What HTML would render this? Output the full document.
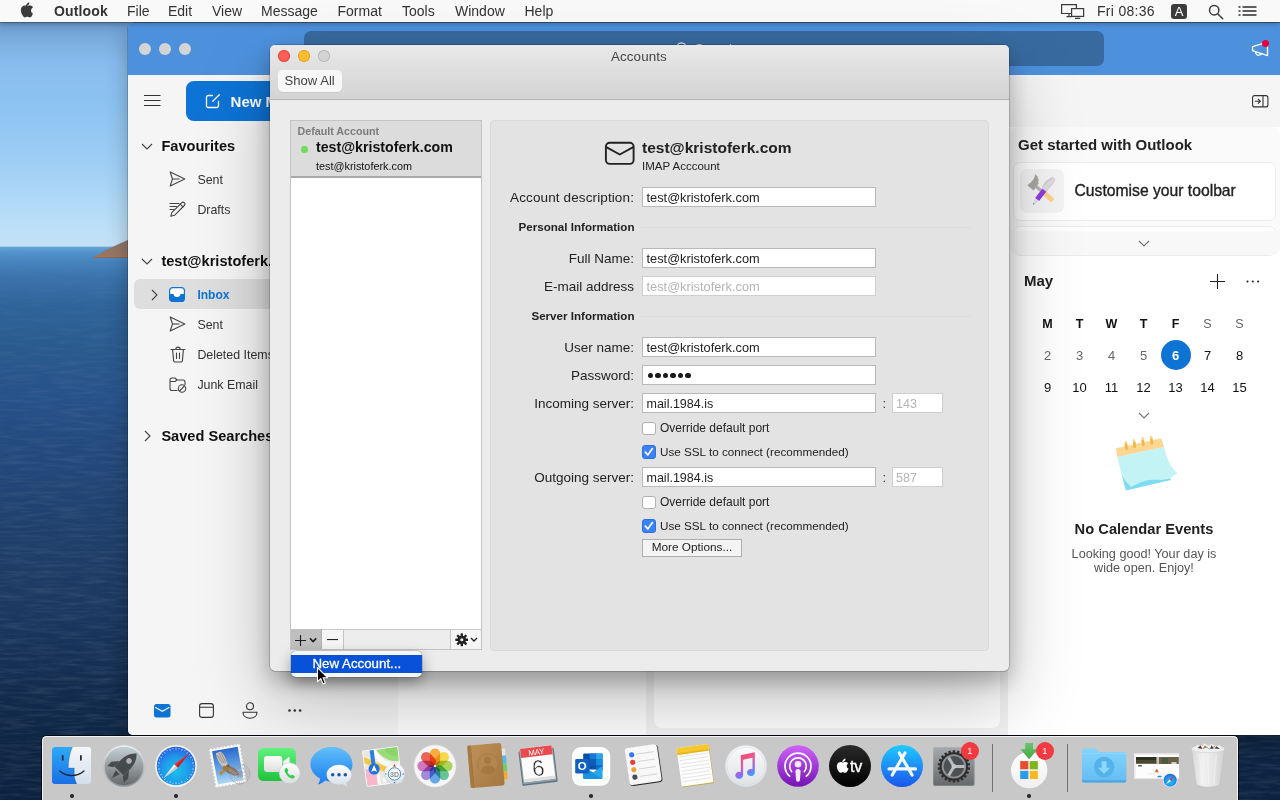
<!DOCTYPE html>
<html lang="en">
<head>
<meta charset="utf-8">
<title>Accounts</title>
<style>
*{box-sizing:border-box;margin:0;padding:0}
html,body{width:1280px;height:800px;overflow:hidden;background:#17345c}
body{will-change:transform;font-family:"Liberation Sans",sans-serif;color:#222;position:relative}
.abs{position:absolute}
.t{position:absolute;white-space:nowrap;line-height:1}
#desk{position:absolute;left:0;top:0;width:1280px;height:800px;
 background:linear-gradient(180deg,#6797c9 22px,#7aabdd 38px,#88bcee 62px,#8cc2f1 100px,#9acbf4 150px,#aad6f7 190px,#bbdff7 225px,#c4e1f5 246px,#62a2d6 247.500px,#5191cb 253px,#4683bd 262px,#3a73ab 278px,#2f649a 305px,#2a5a8e 350px,#26518a 400px,#23487a 460px,#1f406c 530px,#1b3860 610px,#132c4e 690px,#0e2645 740px,#0b2140 800px)}
#menubar{position:absolute;left:0;top:0;width:1280px;height:22px;background:#f9f9f9;box-shadow:0 1px 0 rgba(0,0,0,.25),0 2px 5px rgba(0,0,0,.25)}
#menubar .t{font-size:14px;color:#333;top:4px}
#ol{position:absolute;left:128px;top:23px;width:1160px;height:712px;background:#f1f1f1;border-radius:5px 0 0 5px;overflow:hidden;box-shadow:0 0 0 .5px rgba(0,0,0,.35),0 8px 22px rgba(0,0,0,.28)}
#oltitle{position:absolute;left:0;top:0;width:1160px;height:52px;background:#4d91dd}
#olsearch{position:absolute;left:176px;top:8px;width:800px;height:35px;border-radius:7px;background:#386aa0}
.tl{position:absolute;width:12px;height:12px;border-radius:50%}
#side{position:absolute;left:0;top:52px;width:270px;height:660px;background:#f5f5f5}
#side .h{font-weight:bold;color:#111}
#side .i{color:#333}
#list{position:absolute;left:270px;top:52px;width:248px;height:660px;background:#fdfdfd}
#read{position:absolute;left:526px;top:60px;width:346px;height:644.500px;background:#fefefe;border-radius:8px}
#right{position:absolute;left:880px;top:52px;width:280px;height:660px;background:#fff;overflow:hidden}
#dlg{position:absolute;left:270px;top:45px;width:739px;height:626px;background:#ececec;border-radius:5px;box-shadow:0 0 0 .5px rgba(0,0,0,.35),0 30px 70px rgba(0,0,0,.25),0 10px 22px rgba(0,0,0,.26)}
#dlgbar{position:absolute;left:0;top:0;width:739px;height:54.500px;border-radius:5px 5px 0 0;background:linear-gradient(180deg,#e9e9e9,#d3d3d3);border-bottom:1px solid #b4b4b4}
.inp{position:absolute;background:#fff;border:1px solid #b9b9b9;padding-left:3.500px;color:#222;white-space:nowrap;overflow:hidden}
.inp.dis{color:#b5b5b5;border-color:#cfcfcf}
.cb{position:absolute;border-radius:3px;background:#fff;border:1px solid #b0b0b0}
.cb.on{background:#3b82f7;border-color:#2f6fe0}
#dock{position:absolute;left:42px;top:736px;width:1196px;height:70px;background:#c8c8c8;border-radius:4.500px 4.500px 0 0;border:1px solid #f2f2f2;border-bottom:0;box-shadow:0 0 0 1px rgba(0,0,0,.72)}
.dot{position:absolute;width:3px;height:3px;border-radius:50%;background:#2b2b2b}
</style>
</head>
<body>
<div id="desk"></div>
<svg class="abs" style="left:0;top:248px" width="1280" height="552"><defs><filter id="fSea" x="0" y="0" width="100%" height="100%"><feTurbulence type="fractalNoise" baseFrequency="0.035 0.300" numOctaves="3" seed="7"/><feColorMatrix type="matrix" values="0 0 0 0 1  0 0 0 0 1  0 0 0 0 1  1.600 0 0 0 -.62"/></filter><linearGradient id="gSeaFade" x1="0" y1="0" x2="0" y2="1"><stop offset="0" stop-color="#fff" stop-opacity=".15"/><stop offset=".25" stop-color="#fff" stop-opacity=".6"/><stop offset="1" stop-color="#fff" stop-opacity="1"/></linearGradient><mask id="mSea"><rect width="1280" height="552" fill="url(#gSeaFade)"/></mask></defs><g mask="url(#mSea)" opacity=".13"><rect width="128" height="552" filter="url(#fSea)"/><rect x="1238" y="480" width="42" height="72" filter="url(#fSea)"/></g></svg>
<svg class="abs" style="left:92px;top:238px" width="40" height="21" viewBox="0 0 40 21"><defs><linearGradient id="gIsl" x1="0" y1="0" x2="0" y2="1"><stop offset="0" stop-color="#8a7470"/><stop offset="1" stop-color="#9b7860"/></linearGradient></defs><path d="M.5 19.600L6 16.500 14 12 22 8.300 29 5 36 2V20L2 19.900z" fill="url(#gIsl)"/><path d="M.5 19.600L36 19.300V20H2z" fill="#7a6458"/></svg>
<div id="ol">
 <div id="oltitle">
  <div class="tl" style="left:11px;top:20px;background:#d4d4d4"></div>
  <div class="tl" style="left:31px;top:20px;background:#d4d4d4"></div>
  <div class="tl" style="left:51px;top:20px;background:#d4d4d4"></div>
  <div id="olsearch"></div>
  <svg class="abs" style="left:548px;top:19px" width="14" height="14" viewBox="0 0 14 14" fill="none" stroke="#e8eef6" stroke-width="1.200"><circle cx="5.500" cy="5.500" r="4.700"/><path d="M9 9l4 4"/></svg>
  <div class="t" style="left:567px;top:19.300px;font-size:13px;color:#e8eef6">Search</div>
  <svg class="abs" style="left:1123px;top:16px" width="20" height="20" viewBox="0 0 20 20" fill="none" stroke="#fff" stroke-width="1.300" stroke-linejoin="round" stroke-linecap="round"><path d="M1.600 7.700L16.500 3.200v13.400L1.600 11.700z"/><path d="M4.500 12.800c.3 2 1.600 3.400 3.400 3.400 1.300 0 2.300-.8 2.800-1.700"/></svg>
  <div class="abs" style="left:1134px;top:17px;width:7px;height:7px;border-radius:50%;background:#e8003c"></div>
 </div>
<div id="side">
 <svg class="abs" style="left:16px;top:19px" width="17" height="13" viewBox="0 0 17 13" stroke="#333" stroke-width="1.100"><path d="M0 1.500h16.500M0 6.500h16.500M0 11.500h16.500"/></svg>
 <div class="abs" style="left:58px;top:6px;width:200px;height:39.500px;border-radius:8px;background:#0d73d5"></div>
 <svg class="abs" style="left:76.5px;top:17.5px" width="16" height="16" viewBox="0 0 16 16" fill="none" stroke="#fff" stroke-width="1.300" stroke-linecap="round" stroke-linejoin="round"><path d="M7.500 2.500H3.300A1.800 1.800 0 0 0 1.500 4.300v8.400a1.800 1.800 0 0 0 1.800 1.800h8.400a1.800 1.800 0 0 0 1.800-1.800V8.500"/><path d="M14.300 1.700L7.800 8.200"/></svg>
 <div class="t" style="left:102.6px;top:18.90px;font-size:15px;font-weight:bold;color:#fff">New Message</div>
 <svg class="abs" style="left:13px;top:68px" width="12" height="7" viewBox="0 0 12 7" fill="none" stroke="#444" stroke-width="1.100"><path d="M1 1l5 5 5-5"/></svg>
 <div class="t h" style="left:33.4px;top:64.04px;font-size:14.6px;">Favourites</div>
 <svg class="abs" style="left:41px;top:96px" width="17" height="16" viewBox="0 0 17 16" fill="none" stroke="#444" stroke-width="1.100" stroke-linejoin="round"><path d="M1.200 1l14.600 7L1.200 15l2.300-7z"/><path d="M3.500 8h7"/></svg>
 <div class="t i" style="left:69.4px;top:98.50px;font-size:12.4px;">Sent</div>
 <svg class="abs" style="left:40.5px;top:125.5px" width="17" height="17" viewBox="0 0 17 17" fill="none" stroke="#444" stroke-width="1.100" stroke-linejoin="round" stroke-linecap="round"><path d="M1 2.500h9M1 5.500h6.500M1 8.500h4"/><path d="M12.600 1.800a1.900 1.900 0 0 1 2.700 2.700L5.500 14.300l-3.700 1 1-3.700z"/><path d="M11.300 3.100l2.700 2.700"/></svg>
 <div class="t i" style="left:69.4px;top:128.50px;font-size:12.4px;">Drafts</div>
 <svg class="abs" style="left:13px;top:183px" width="12" height="7" viewBox="0 0 12 7" fill="none" stroke="#444" stroke-width="1.100"><path d="M1 1l5 5 5-5"/></svg>
 <div class="t h" style="left:33.4px;top:178.94px;font-size:14.6px;">test@kristoferk.com</div>
 <div class="abs" style="left:6px;top:204px;width:260px;height:29.500px;border-radius:6px;background:#dedede"></div>
 <svg class="abs" style="left:23px;top:214px" width="7" height="12" viewBox="0 0 7 12" fill="none" stroke="#444" stroke-width="1.100"><path d="M1 1l5 5-5 5"/></svg>
 <svg class="abs" style="left:41px;top:212px" width="16" height="15" viewBox="0 0 16 15"><rect x=".6" y=".6" width="14.800" height="13.800" rx="3" fill="#fff" stroke="#0d73d5" stroke-width="1.200"/><path d="M.6 7h4a3.200 2.800 0 0 0 6.800 0h4v4.400a3 3 0 0 1-3 3H3.600a3 3 0 0 1-3-3z" fill="#0d73d5"/></svg>
 <div class="t" style="left:69.4px;top:213.84px;font-size:12px;font-weight:bold;color:#0d73d5">Inbox</div>
 <svg class="abs" style="left:41px;top:241px" width="17" height="16" viewBox="0 0 17 16" fill="none" stroke="#444" stroke-width="1.100" stroke-linejoin="round"><path d="M1.200 1l14.600 7L1.200 15l2.300-7z"/><path d="M3.500 8h7"/></svg>
 <div class="t i" style="left:69.4px;top:243.70px;font-size:12.4px;">Sent</div>
 <svg class="abs" style="left:41.5px;top:270.5px" width="16" height="17" viewBox="0 0 16 17" fill="none" stroke="#444" stroke-width="1.100" stroke-linecap="round" stroke-linejoin="round"><path d="M1 3.500h14M5.800 3.300a2.200 2.200 0 0 1 4.400 0"/><path d="M2.600 3.600l1 11a1.600 1.600 0 0 0 1.600 1.400h5.600a1.600 1.600 0 0 0 1.600-1.400l1-11"/><path d="M6.500 7v5.500M9.500 7v5.500"/></svg>
 <div class="t i" style="left:69.4px;top:273.50px;font-size:12.4px;">Deleted Items</div>
 <svg class="abs" style="left:40.5px;top:301.5px" width="18" height="16" viewBox="0 0 18 16" fill="none" stroke="#444" stroke-width="1.100" stroke-linejoin="round"><path d="M8.500 13.500H3A2 2 0 0 1 1 11.500V3a2 2 0 0 1 2-2h3l2 2h6a2 2 0 0 1 2 2v3"/><path d="M1 4.500h5l2-1.500"/><circle cx="13" cy="11.500" r="3.700"/><path d="M10.500 14l5-5"/></svg>
 <div class="t i" style="left:69.4px;top:303.50px;font-size:12.4px;">Junk Email</div>
 <svg class="abs" style="left:15.5px;top:355px" width="7" height="12" viewBox="0 0 7 12" fill="none" stroke="#444" stroke-width="1.100"><path d="M1 1l5 5-5 5"/></svg>
 <div class="t h" style="left:33.4px;top:353.64px;font-size:14.6px;">Saved Searches</div>
 <svg class="abs" style="left:26px;top:628.5px" width="17" height="14" viewBox="0 0 17 14"><rect x="0" y="0" width="16.500" height="13.500" rx="2.500" fill="#0d73d5"/><path d="M1 3.200l7.250 4 7.250-4" fill="none" stroke="#f5f5f5" stroke-width="1.200"/></svg>
 <svg class="abs" style="left:70.5px;top:627.5px" width="15" height="15" viewBox="0 0 15 15" fill="none" stroke="#333" stroke-width="1.100"><rect x=".6" y=".6" width="13.800" height="13.800" rx="2.500"/><path d="M.6 4.200h13.800"/></svg>
 <svg class="abs" style="left:114px;top:626.5px" width="16" height="17" viewBox="0 0 16 17" fill="none" stroke="#333" stroke-width="1.100"><circle cx="8" cy="4.300" r="3.500"/><path d="M1 10.200h14c0 3.600-3 6-7 6s-7-2.400-7-6z" stroke-linejoin="round"/></svg>
 <svg class="abs" style="left:159.5px;top:633.7px" width="14" height="3" viewBox="0 0 14 3" fill="#333"><circle cx="1.500" cy="1.500" r="1.300"/><circle cx="6.800" cy="1.500" r="1.300"/><circle cx="12.100" cy="1.500" r="1.300"/></svg>
</div>
 <div id="list"></div>
 <div id="read"></div>
<div id="right">
 <div class="abs" style="left:0;top:0;width:280px;height:52px;background:#f5f5f5"></div>
 <svg class="abs" style="left:244px;top:20px" width="17" height="13" viewBox="0 0 17 13" fill="none" stroke="#333" stroke-width="1.100"><rect x=".6" y=".6" width="15.300" height="11.300" rx="2"/><path d="M11 .6v11.300"/><path d="M3.200 6.250h5M6.200 4.200l2.100 2.050-2.100 2.050" stroke-linecap="round" stroke-linejoin="round"/></svg>
 <div class="abs" style="left:2px;top:52px;width:270px;height:128px;border-radius:8px;background:#fafafa"></div>
 <div class="t" style="left:10px;top:62.30px;font-size:15px;font-weight:bold;color:#222">Get started with Outlook</div>
 <div class="abs" style="left:4.5px;top:86.5px;width:263px;height:59px;border-radius:7px;background:#fff;border:1px solid #ececec"></div>
 <div class="abs" style="left:12px;top:94px;width:44px;height:44px;border-radius:7px;background:#f4f4f4"></div>
 <svg class="abs" style="left:12px;top:94px" width="44" height="44" viewBox="0 0 44 44"><g transform="translate(13.500 15.300) rotate(-50)"><rect x="-1.600" y="2" width="3.200" height="11" fill="#b7b4b0"/><rect x="-2.500" y="11" width="5" height="14.300" rx=".8" fill="#fdd38c"/><path transform="translate(2.600 0)" d="M-7.400-3.900h2.600l.8.600h3.800c2.400 0 4.300-.5 6.200-1.700l.9.900-1.300 1 .9.900-1.500.700.700 1-1.500.5.300 1c-1.800.6-2.800 1.500-3.400 2.500h-5.100l-.8.600h-2.600z" fill="#a9a6a1"/></g><g transform="translate(13.250 35.300) rotate(38)"><path d="M-2.500-17.900V-31a2.500 2.500 0 0 1 5 0v13.100z" fill="#dfdddb" stroke="#b38ae8" stroke-width=".25"/><path d="M-3.600-19.500v-6.500c0-3 1.200-4.500 3-5" fill="none" stroke="#c9c7c4" stroke-width="1.100"/><rect x="-2.500" y="-17.900" width="5" height="11.700" fill="#8e3be4"/><path d="M-2.500-6.200h5L.7-1.200H-.7z" fill="#e3e1df"/><path d="M-.7-1.300H.7L0 .6z" fill="#3b78c4"/></g></svg>
 <div class="t" style="left:66.5px;top:107.71px;font-size:15.7px;color:#222;-webkit-text-stroke:.35px #222">Customise your toolbar</div>
 <div class="abs" style="left:4.5px;top:150.5px;width:263px;height:30px;border-radius:7px;background:#fff;border:1px solid #ececec"></div>
 <div class="abs" style="left:2px;top:156px;width:270px;height:24px;border-radius:0 0 8px 8px;background:#f8f8f8"></div>
 <svg class="abs" style="left:130px;top:165px" width="12" height="7" viewBox="0 0 12 7" fill="none" stroke="#777" stroke-width="1.200"><path d="M1 1l5 5 5-5"/></svg>
 <div class="t" style="left:16px;top:198.30px;font-size:15px;font-weight:bold;color:#222">May</div>
 <svg class="abs" style="left:202px;top:198.5px" width="15" height="15" viewBox="0 0 15 15" stroke="#222" stroke-width="1.100"><path d="M7.500 0v15M0 7.500h15"/></svg>
 <svg class="abs" style="left:237.5px;top:204.7px" width="14" height="3" viewBox="0 0 14 3" fill="#222"><circle cx="1.500" cy="1.500" r="1.050"/><circle cx="6.800" cy="1.500" r="1.050"/><circle cx="12.100" cy="1.500" r="1.050"/></svg>
 <div class="t" style="left:-10.5px;width:100px;text-align:center;top:243.42px;font-size:12.5px;font-weight:bold;color:#111">M</div>
 <div class="t" style="left:21.5px;width:100px;text-align:center;top:243.42px;font-size:12.5px;font-weight:bold;color:#111">T</div>
 <div class="t" style="left:53.5px;width:100px;text-align:center;top:243.42px;font-size:12.5px;font-weight:bold;color:#111">W</div>
 <div class="t" style="left:85.5px;width:100px;text-align:center;top:243.42px;font-size:12.5px;font-weight:bold;color:#111">T</div>
 <div class="t" style="left:117.5px;width:100px;text-align:center;top:243.42px;font-size:12.5px;font-weight:bold;color:#111">F</div>
 <div class="t" style="left:149.5px;width:100px;text-align:center;top:243.42px;font-size:12.5px;color:#666">S</div>
 <div class="t" style="left:181.5px;width:100px;text-align:center;top:243.42px;font-size:12.5px;color:#666">S</div>
 <div class="abs" style="left:152.5px;top:265px;width:30px;height:30px;border-radius:50%;background:#0d73d5"></div>
 <div class="t" style="left:-10.5px;width:100px;text-align:center;top:274.00px;font-size:13px;color:#666">2</div>
 <div class="t" style="left:21.5px;width:100px;text-align:center;top:274.00px;font-size:13px;color:#666">3</div>
 <div class="t" style="left:53.5px;width:100px;text-align:center;top:274.00px;font-size:13px;color:#666">4</div>
 <div class="t" style="left:85.5px;width:100px;text-align:center;top:274.00px;font-size:13px;color:#666">5</div>
 <div class="t" style="left:117.5px;width:100px;text-align:center;top:274.00px;font-size:13px;color:#fff;font-weight:bold">6</div>
 <div class="t" style="left:149.5px;width:100px;text-align:center;top:274.00px;font-size:13px;color:#111">7</div>
 <div class="t" style="left:181.5px;width:100px;text-align:center;top:274.00px;font-size:13px;color:#111">8</div>
 <div class="t" style="left:-10.5px;width:100px;text-align:center;top:306.00px;font-size:13px;color:#111">9</div>
 <div class="t" style="left:21.5px;width:100px;text-align:center;top:306.00px;font-size:13px;color:#111">10</div>
 <div class="t" style="left:53.5px;width:100px;text-align:center;top:306.00px;font-size:13px;color:#111">11</div>
 <div class="t" style="left:85.5px;width:100px;text-align:center;top:306.00px;font-size:13px;color:#111">12</div>
 <div class="t" style="left:117.5px;width:100px;text-align:center;top:306.00px;font-size:13px;color:#111">13</div>
 <div class="t" style="left:149.5px;width:100px;text-align:center;top:306.00px;font-size:13px;color:#111">14</div>
 <div class="t" style="left:181.5px;width:100px;text-align:center;top:306.00px;font-size:13px;color:#111">15</div>
 
 <svg class="abs" style="left:130px;top:337px" width="12" height="7" viewBox="0 0 12 7" fill="none" stroke="#777" stroke-width="1.200"><path d="M1 1l5 5 5-5"/></svg>
 <svg class="abs" style="left:106px;top:359px" width="66" height="58" viewBox="0 0 66 58"><path d="M7.500 40L11.900 56.600 56.900 46.100 55.600 43z" fill="#7edcf0"/><path d="M3.300 22.900L49.900 12.800C51 16.500 51.800 19.500 53 22.900 54.500 27 55.500 30 57.400 32.500 59 35 61 37.300 63.500 39.100 59.500 42.500 56 44.800 51.200 45.600 46 46.400 40.500 45.300 35.500 46.100 31.500 46.700 28 47.800 25 49.100 22 50.400 19.500 51.800 17.100 53.100Q11.500 47.500 7.900 41.700z" fill="#c3f3f4"/><path d="M2.070 14.300L45.600 4.700Q47.300 4.300 47.800 5.900L49.900 12.800 3.300 22.900z" fill="#fdd692"/><g stroke-width="2.700" stroke-linecap="round"><path d="M11.700 8.300l.4 3M20 6.500l.4 2.800M28.500 4.400l.4 2.800M37.100 3l.4 2.800" stroke="#fdd692"/><path d="M12 10.800l.6 4M20.300 9l.5 3.700M28.800 7l.5 3.800M37.400 5.600l.5 3.600" stroke="#f6b648"/></g></svg>
 <div class="t" style="left:36.0px;width:200px;text-align:center;top:446.56px;font-size:14.7px;font-weight:bold;color:#222">No Calendar Events</div>
 <div class="t" style="left:36.0px;width:200px;text-align:center;top:472.89px;font-size:12.65px;color:#555">Looking good! Your day is</div>
 <div class="t" style="left:36.0px;width:200px;text-align:center;top:487.49px;font-size:12.65px;color:#555">wide open. Enjoy!</div>
</div>
</div>
<div id="menubar">
 <svg class="abs" style="left:20px;top:2px" width="15" height="16" viewBox="0 0 15 16"><path d="M10.300 0.200c.1 1-.3 1.900-.9 2.600-.6.700-1.500 1.200-2.400 1.100-.1-.9.300-1.900.9-2.500.6-.7 1.600-1.200 2.400-1.200zM13.700 5.500c-.1.100-1.700 1-1.700 2.900 0 2.300 2 3 2 3.100 0 .1-.3 1.100-1 2.100-.6.900-1.300 1.800-2.300 1.800s-1.300-.6-2.400-.6c-1.200 0-1.500.6-2.400.6-1 0-1.700-.9-2.400-1.900C2.500 12 1.700 9.900 1.700 7.900c0-3.100 2-4.700 4-4.700 1 0 1.900.7 2.500.7.600 0 1.600-.7 2.800-.7.400 0 2 .0 3 1.500z" fill="#3a3a3a" transform="translate(-.8,.3) scale(.98)"/></svg>
 <div class="t" style="left:54px;font-weight:bold;letter-spacing:.15px">Outlook</div>
 <div class="t" style="left:127px">File</div>
 <div class="t" style="left:168px">Edit</div>
 <div class="t" style="left:212px">View</div>
 <div class="t" style="left:261px">Message</div>
 <div class="t" style="left:337.500px">Format</div>
 <div class="t" style="left:402px">Tools</div>
 <div class="t" style="left:455px">Window</div>
 <div class="t" style="left:524.500px">Help</div>
 <svg class="abs" style="left:1060px;top:3px" width="26" height="16" viewBox="0 0 26 16" fill="none" stroke="#3a3a3a" stroke-width="1.200"><path d="M11 10.500H1.600V1.600h14.800v3.400"/><path d="M6.500 13.600h5M9 10.500v3" /><rect x="11.600" y="5.600" width="12" height="7.800" fill="#f9f9f9"/><path d="M15 15.400h5.200" stroke-width="1.400"/></svg>
 <div class="t" style="left:1097px;letter-spacing:.3px">Fri 08:36</div>
 <div class="abs" style="left:1171px;top:3.500px;width:16px;height:15.500px;border-radius:3px;background:#3c3c3c"></div>
 <div class="t" style="left:1174.800px;top:5px;color:#fff;font-size:13px">A</div>
 <svg class="abs" style="left:1208px;top:4px" width="16" height="16" viewBox="0 0 16 16" fill="none" stroke="#3a3a3a" stroke-width="1.500"><circle cx="6.200" cy="6.200" r="4.700"/><path d="M9.700 9.700l5 5" stroke-linecap="round"/></svg>
 <svg class="abs" style="left:1238px;top:4px" width="20" height="14" viewBox="0 0 20 14" fill="#3a3a3a"><rect x="0.500" y="2.200" width="2" height="1.600"/><rect x="4.500" y="2.200" width="14" height="1.600"/><rect x="0.500" y="6.200" width="2" height="1.600"/><rect x="4.500" y="6.200" width="14" height="1.600"/><rect x="0.500" y="10.200" width="2" height="1.600"/><rect x="4.500" y="10.200" width="14" height="1.600"/></svg>
</div>
<div id="dlg">
 <div id="dlgbar"></div>
 <div class="tl" style="left:8px;top:5px;background:#fd5f57;box-shadow:inset 0 0 0 .8px rgba(215,50,45,.75)"></div>
 <div class="tl" style="left:28px;top:5px;background:#febc2e;box-shadow:inset 0 0 0 .8px rgba(215,150,25,.8)"></div>
 <div class="tl" style="left:48px;top:5px;background:#d3d3d3;box-shadow:inset 0 0 0 .8px rgba(170,170,170,.8)"></div>
 <div class="t" style="left:341px;top:4.66px;font-size:13.4px;color:#444;letter-spacing:.1px">Accounts</div>
 <div class="abs" style="left:8px;top:25px;width:64px;height:22px;border-radius:4.500px;background:#f7f7f7;box-shadow:0 .5px .5px rgba(0,0,0,.12)"></div>
 <div class="t" style="left:14.5px;top:29.11px;font-size:13.1px;color:#444">Show All</div>
 <div class="abs" style="left:20px;top:75px;width:192px;height:530px;background:#fff;border:1px solid #c4c4c4"></div>
 <div class="abs" style="left:21px;top:76px;width:190px;height:57px;background:#dcdcdc;border-bottom:2px solid #a9a9a9"></div>
 <div class="t" style="left:27.5px;top:80.94px;font-size:10.7px;font-weight:bold;color:#7b7b7b">Default Account</div>
 <div class="abs" style="left:31px;top:101px;width:6.500px;height:6.500px;border-radius:50%;background:#6fdc5c"></div>
 <div class="t" style="left:46px;top:94.88px;font-size:14.2px;font-weight:bold;color:#111">test@kristoferk.com</div>
 <div class="t" style="left:46px;top:115.82px;font-size:10.85px;color:#111">test@kristoferk.com</div>
 <div class="abs" style="left:21px;top:584px;width:190px;height:20px;background:#ededed;border-top:1px solid #c9c9c9"></div>
 <div class="abs" style="left:21px;top:584px;width:31px;height:20px;background:#bfbfbf;border-right:1px solid #b0b0b0"></div>
 <div class="abs" style="left:52px;top:585px;width:22px;height:19px;background:#f5f5f5;border-right:1px solid #c4c4c4"></div>
 <div class="abs" style="left:180px;top:585px;width:31px;height:19px;background:#f5f5f5;border-left:1px solid #c4c4c4"></div>
 <svg class="abs" style="left:24px;top:589px" width="26" height="13" viewBox="0 0 26 13" fill="none" stroke="#1e1e1e" stroke-width="1.100"><path d="M6.500 1v11M1 6.500h11"/><path d="M16 4.400l3.100 3.100 3.100-3.100" stroke-width="1.600"/></svg>
 <svg class="abs" style="left:57px;top:594px" width="12" height="2" viewBox="0 0 12 2" stroke="#222" stroke-width="1.100"><path d="M0 .55h11"/></svg>
 <svg class="abs" style="left:184.7px;top:588.2px" width="13.600" height="13.600" viewBox="0 0 15 15"><g fill="#222"><circle cx="7.500" cy="7.500" r="4.600"/><rect x="6.200" y="0.300" width="2.600" height="4" rx=".5" transform="rotate(0 7.500 7.500)"/><rect x="6.200" y="0.300" width="2.600" height="4" rx=".5" transform="rotate(45 7.500 7.500)"/><rect x="6.200" y="0.300" width="2.600" height="4" rx=".5" transform="rotate(90 7.500 7.500)"/><rect x="6.200" y="0.300" width="2.600" height="4" rx=".5" transform="rotate(135 7.500 7.500)"/><rect x="6.200" y="0.300" width="2.600" height="4" rx=".5" transform="rotate(180 7.500 7.500)"/><rect x="6.200" y="0.300" width="2.600" height="4" rx=".5" transform="rotate(225 7.500 7.500)"/><rect x="6.200" y="0.300" width="2.600" height="4" rx=".5" transform="rotate(270 7.500 7.500)"/><rect x="6.200" y="0.300" width="2.600" height="4" rx=".5" transform="rotate(315 7.500 7.500)"/></g><circle cx="7.500" cy="7.500" r="1.700" fill="#f0f0f0"/></svg>
 <svg class="abs" style="left:200px;top:592px" width="9" height="6" viewBox="0 0 9 6" fill="none" stroke="#222" stroke-width="1.400"><path d="M1 1l3 3 3-3"/></svg>
 <div class="abs" style="left:220px;top:75px;width:499px;height:531px;border-radius:4px;background:#e3e3e3;border:1px solid #dadada"></div>
 <svg class="abs" style="left:334px;top:96px" width="32" height="25" viewBox="0 0 32 25" fill="none" stroke="#222" stroke-width="1.900" stroke-linejoin="round"><rect x="1.900" y="1.700" width="27.700" height="21.200" rx="3.800"/><path d="M2.300 6.200l13.450 7.300L29.200 6.200"/></svg>
 <div class="t" style="left:372px;top:94.68px;font-size:15.5px;font-weight:bold;color:#222">test@kristoferk.com</div>
 <div class="t" style="left:372px;top:116.27px;font-size:11.5px;color:#222">IMAP Acccount</div>
 <div class="t" style="left:114px;width:250px;text-align:right;top:145.87px;font-size:13.5px;letter-spacing:.12px">Account description:</div>
 <div class="inp" style="left:372px;top:142px;width:234px;height:19.5px;font-size:12.8px;line-height:19.0px">test@kristoferk.com</div>
 <div class="t" style="left:114.5px;width:250px;text-align:right;top:176.18px;font-size:11.6px;font-weight:bold">Personal Information</div>
 <div class="abs" style="left:371px;top:182px;width:330px;height:1px;background:#dcdcdc"></div>
 <div class="t" style="left:114px;width:250px;text-align:right;top:206.97px;font-size:13.5px;">Full Name:</div>
 <div class="inp" style="left:372px;top:203px;width:234px;height:19.5px;font-size:12.8px;line-height:19.0px">test@kristoferk.com</div>
 <div class="t" style="left:114px;width:250px;text-align:right;top:234.87px;font-size:13.5px;">E-mail address</div>
 <div class="inp dis" style="left:372px;top:231px;width:234px;height:19.5px;font-size:12.8px;line-height:19.0px">test@kristoferk.com</div>
 <div class="t" style="left:114.5px;width:250px;text-align:right;top:265.18px;font-size:11.6px;font-weight:bold">Server Information</div>
 <div class="abs" style="left:371px;top:271px;width:330px;height:1px;background:#dcdcdc"></div>
 <div class="t" style="left:114px;width:250px;text-align:right;top:295.87px;font-size:13.5px;">User name:</div>
 <div class="inp" style="left:372px;top:292px;width:234px;height:19.5px;font-size:12.8px;line-height:19.0px">test@kristoferk.com</div>
 <div class="t" style="left:114px;width:250px;text-align:right;top:323.87px;font-size:13.5px;">Password:</div>
 <div class="inp" style="left:372px;top:320.3px;width:234px;height:19.5px;font-size:12.8px;line-height:19.0px"><i style="position:absolute;left:4.60px;top:6.300px;width:5.600px;height:5.600px;border-radius:50%;background:#1a1a1a"></i><i style="position:absolute;left:12.15px;top:6.300px;width:5.600px;height:5.600px;border-radius:50%;background:#1a1a1a"></i><i style="position:absolute;left:19.70px;top:6.300px;width:5.600px;height:5.600px;border-radius:50%;background:#1a1a1a"></i><i style="position:absolute;left:27.25px;top:6.300px;width:5.600px;height:5.600px;border-radius:50%;background:#1a1a1a"></i><i style="position:absolute;left:34.80px;top:6.300px;width:5.600px;height:5.600px;border-radius:50%;background:#1a1a1a"></i><i style="position:absolute;left:42.35px;top:6.300px;width:5.600px;height:5.600px;border-radius:50%;background:#1a1a1a"></i></div>
 <div class="t" style="left:114px;width:250px;text-align:right;top:351.87px;font-size:13.5px;">Incoming server:</div>
 <div class="inp" style="left:372px;top:348.3px;width:234px;height:19.5px;font-size:12.5px;line-height:21.0px">mail.1984.is</div>
 <div class="t" style="left:612.5px;top:351.50px;font-size:13px;color:#333">:</div>
 <div class="inp dis" style="left:621.5px;top:348.3px;width:51.5px;height:19.5px;font-size:12.5px;line-height:21.0px">143</div>
 <div class="cb" style="left:372.3px;top:376.5px;width:13.500px;height:13.500px"></div><div class="t" style="left:390px;top:376.54px;font-size:12px;color:#222">Override default port</div>
 <div class="cb on" style="left:372.3px;top:400.3px;width:13.500px;height:13.500px"></div><svg class="abs" style="left:372.3px;top:400.3px" width="13.500" height="13.500" viewBox="0 0 13.500 13.500" fill="none" stroke="#fff" stroke-width="1.700" stroke-linecap="round" stroke-linejoin="round"><path d="M3.300 7.200l2.500 2.700 4.600-6.300"/></svg><div class="t" style="left:390px;top:400.60px;font-size:11.7px;color:#222">Use SSL to connect (recommended)</div>
 <div class="t" style="left:114px;width:250px;text-align:right;top:425.87px;font-size:13.5px;">Outgoing server:</div>
 <div class="inp" style="left:372px;top:422.3px;width:234px;height:19.5px;font-size:12.5px;line-height:21.0px">mail.1984.is</div>
 <div class="t" style="left:612.5px;top:425.50px;font-size:13px;color:#333">:</div>
 <div class="inp dis" style="left:621.5px;top:422.3px;width:51.5px;height:19.5px;font-size:12.5px;line-height:21.0px">587</div>
 <div class="cb" style="left:372.3px;top:450.5px;width:13.500px;height:13.500px"></div><div class="t" style="left:390px;top:450.54px;font-size:12px;color:#222">Override default port</div>
 <div class="cb on" style="left:372.3px;top:474.3px;width:13.500px;height:13.500px"></div><svg class="abs" style="left:372.3px;top:474.3px" width="13.500" height="13.500" viewBox="0 0 13.500 13.500" fill="none" stroke="#fff" stroke-width="1.700" stroke-linecap="round" stroke-linejoin="round"><path d="M3.300 7.200l2.500 2.700 4.600-6.300"/></svg><div class="t" style="left:390px;top:474.60px;font-size:11.7px;color:#222">Use SSL to connect (recommended)</div>
 <div class="abs" style="left:372px;top:494px;width:99.500px;height:18px;background:#f4f4f4;border:1px solid #aeaeae"></div>
 <div class="t" style="left:381.7px;top:497.01px;font-size:11.8px;color:#222">More Options...</div>
</div>
<div class="abs" style="left:291px;top:651px;width:131px;height:26px;border-radius:5px;background:#f6f6f6;box-shadow:0 0 0 .5px rgba(0,0,0,.25),0 5px 14px rgba(0,0,0,.35)"></div>
<div class="abs" style="left:291px;top:655px;width:131px;height:17.500px;background:#0752d9"></div>
<div class="t" style="left:312.5px;top:656.74px;font-size:13.3px;color:#fff;-webkit-text-stroke:.3px #fff">New Account...</div>
<svg class="abs" style="left:316px;top:666px" width="14" height="20" viewBox="0 0 14 20"><path d="M1.500 1.500v14.200l3.300-3.100 2.300 5.500 2.300-1-2.300-5.300h4.600z" fill="#000" stroke="#fff" stroke-width="1.100" stroke-linejoin="round"/></svg>
<div id="dock"></div>
<svg width="0" height="0" style="position:absolute"><defs>
<linearGradient id="gFinL" x1="0" y1="0" x2="0" y2="1"><stop offset="0" stop-color="#2daaf6"/><stop offset="1" stop-color="#1a6fe6"/></linearGradient>
<linearGradient id="gFinR" x1="0" y1="0" x2="0" y2="1"><stop offset="0" stop-color="#f6f8fb"/><stop offset="1" stop-color="#d3deec"/></linearGradient>
<linearGradient id="gLpO" x1="0" y1="0" x2="0" y2="1"><stop offset="0" stop-color="#eef3f5"/><stop offset="1" stop-color="#8d9194"/></linearGradient>
<linearGradient id="gLpI" x1="0" y1="0" x2="0" y2="1"><stop offset="0" stop-color="#c3d0d5"/><stop offset=".5" stop-color="#979da0"/><stop offset="1" stop-color="#67696b"/></linearGradient>
<radialGradient id="gSaf" cx=".5" cy=".62" r=".62"><stop offset="0" stop-color="#1cc0ee"/><stop offset=".55" stop-color="#1e9bea"/><stop offset="1" stop-color="#2a5fe2"/></radialGradient>
<linearGradient id="gSky" x1="0" y1="0" x2="0" y2="1"><stop offset="0" stop-color="#2a68cc"/><stop offset=".6" stop-color="#6aa8e8"/><stop offset="1" stop-color="#b4daf6"/></linearGradient>
<linearGradient id="gFT" x1="0" y1="0" x2="0" y2="1"><stop offset="0" stop-color="#62f27e"/><stop offset="1" stop-color="#1ec23c"/></linearGradient>
<linearGradient id="gWh" x1="0" y1="0" x2="0" y2="1"><stop offset="0" stop-color="#ffffff"/><stop offset="1" stop-color="#dcdcdc"/></linearGradient>
<linearGradient id="gMsg" x1="0" y1="0" x2="0" y2="1"><stop offset="0" stop-color="#62c0f9"/><stop offset="1" stop-color="#1a7cf0"/></linearGradient>
<linearGradient id="gMsg2" x1="0" y1="0" x2="0" y2="1"><stop offset="0" stop-color="#ffffff"/><stop offset="1" stop-color="#d6dfea"/></linearGradient>
<linearGradient id="gBook" x1="0" y1="0" x2="1" y2="1"><stop offset="0" stop-color="#c0925a"/><stop offset="1" stop-color="#a47640"/></linearGradient>
<linearGradient id="gMus" x1="0" y1="0" x2="0" y2="1"><stop offset="0" stop-color="#fbfbfc"/><stop offset="1" stop-color="#dfe2e5"/></linearGradient>
<linearGradient id="gNote" x1=".2" y1="0" x2=".6" y2="1"><stop offset="0" stop-color="#fb3d62"/><stop offset=".45" stop-color="#e85a9a"/><stop offset=".75" stop-color="#8a6cf2"/><stop offset="1" stop-color="#30aafa"/></linearGradient>
<linearGradient id="gPod" x1="0" y1="0" x2="0" y2="1"><stop offset="0" stop-color="#cf62f8"/><stop offset="1" stop-color="#7414b4"/></linearGradient>
<linearGradient id="gTV" x1="0" y1="0" x2="0" y2="1"><stop offset="0" stop-color="#2a2a2a"/><stop offset="1" stop-color="#000"/></linearGradient>
<linearGradient id="gAS" x1="0" y1="0" x2="0" y2="1"><stop offset="0" stop-color="#1fcbff"/><stop offset="1" stop-color="#1a55ee"/></linearGradient>
<linearGradient id="gSP" x1="0" y1="0" x2="0" y2="1"><stop offset="0" stop-color="#a6aaac"/><stop offset="1" stop-color="#65696b"/></linearGradient>
<linearGradient id="gFold" x1="0" y1="0" x2="0" y2="1"><stop offset="0" stop-color="#84d4fb"/><stop offset="1" stop-color="#62bdf3"/></linearGradient>
<linearGradient id="gArr" x1="0" y1="0" x2="0" y2="1"><stop offset="0" stop-color="#6cc46a"/><stop offset="1" stop-color="#46a546"/></linearGradient>
<linearGradient id="gTrash" x1="0" y1="0" x2="1" y2="0"><stop offset="0" stop-color="#d9d9d9"/><stop offset=".35" stop-color="#f4f4f4"/><stop offset=".7" stop-color="#e6e6e6"/><stop offset="1" stop-color="#cfcfcf"/></linearGradient>
</defs></svg>
<svg class="abs" style="left:52px;top:747.4px;overflow:visible" width="39.2" height="36.9" viewBox="0 0 39.2 36.9" ><defs><clipPath id="cFin"><rect x="0" y="0" width="39.200" height="36.900" rx="3"/></clipPath></defs>
<g clip-path="url(#cFin)"><rect width="39.200" height="36.900" fill="url(#gFinR)"/>
<path d="M0 0H20.500C17.500 6.500 16.600 13.500 16.300 21h6v5.500c0 4 .8 7.500 2.500 10.400H0z" fill="url(#gFinL)"/></g>
<path d="M10.700 8.800v4M28.900 8.800v4" stroke="#1c2430" stroke-width="1.700" stroke-linecap="round"/>
<path d="M7.700 24.100c7 6 17.300 6 24.300 0" fill="none" stroke="#1c2430" stroke-width="1.400" stroke-linecap="round"/>
<path d="M20.500 0C17.500 6.500 16.600 13.500 16.300 21h6v5.500c0 4 .8 7.500 2.500 10.400" fill="none" stroke="#1c2430" stroke-width=".5" opacity=".35"/></svg>
<div class="dot" style="left:70.2px;top:794.300px;width:3.400px;height:3.400px"></div>
<svg class="abs" style="left:103px;top:745.1px;overflow:visible" width="42" height="42" viewBox="0 0 42 42" ><circle cx="21" cy="21" r="20.800" fill="url(#gLpO)"/><circle cx="21" cy="21" r="19.300" fill="url(#gLpI)"/>
<g transform="rotate(45 21 21) translate(21 21) scale(1.18) translate(-21 -20.500)" fill="#474a4d"><path d="M21 5.500c4 3.500 5.500 8.500 5.500 13v8h-11v-8c0-4.500 1.500-9.500 5.500-13z"/><path d="M15.500 20l-4.500 5.500v5l4.500-3zM26.500 20l4.500 5.500v5l-4.500-3z"/><path d="M18.500 28h5l-2.500 7z"/><circle cx="21" cy="14.500" r="2.300" fill="#a9b0b4"/></g></svg>
<svg class="abs" style="left:155.1px;top:745px;overflow:visible" width="42" height="42" viewBox="0 0 42 42" ><circle cx="21" cy="21" r="21" fill="#f3f3f3"/><circle cx="21" cy="21" r="19.300" fill="url(#gSaf)"/>
<path d="M21.00 4.70L21.00 2.70M23.97 4.16L24.18 2.98M26.57 5.68L27.26 3.80M29.55 6.19L30.15 5.15M31.48 8.51L32.76 6.98M34.10 10.01L35.02 9.24M35.12 12.85L36.85 11.85M37.07 15.15L38.20 14.74M37.05 18.17L39.02 17.82M38.10 21.00L39.30 21.00M37.05 23.83L39.02 24.18M37.07 26.85L38.20 27.26M35.12 29.15L36.85 30.15M34.10 31.99L35.02 32.76M31.48 33.49L32.76 35.02M29.55 35.81L30.15 36.85M26.57 36.32L27.26 38.20M23.97 37.84L24.18 39.02M21.00 37.30L21.00 39.30M18.03 37.84L17.82 39.02M15.43 36.32L14.74 38.20M12.45 35.81L11.85 36.85M10.52 33.49L9.24 35.02M7.90 31.99L6.98 32.76M6.88 29.15L5.15 30.15M4.93 26.85L3.80 27.26M4.95 23.83L2.98 24.18M3.90 21.00L2.70 21.00M4.95 18.17L2.98 17.82M4.93 15.15L3.80 14.74M6.88 12.85L5.15 11.85M7.90 10.01L6.98 9.24M10.52 8.51L9.24 6.98M12.45 6.19L11.85 5.15M15.43 5.68L14.74 3.80M18.03 4.16L17.82 2.98" stroke="#fff" stroke-width=".7" opacity=".85"/>
<g transform="rotate(46 21 21)"><path d="M21 3.500l2.600 17.500h-5.200z" fill="#f03030"/><path d="M21 38.500l2.600-17.500h-5.200z" fill="#f2f2f2"/><path d="M21 3.500l2.600 17.500H21z" fill="#c41c24"/><path d="M21 38.500l2.600-17.500H21z" fill="#c9c9c9"/></g></svg>
<div class="dot" style="left:174.4px;top:794.300px;width:3.400px;height:3.400px"></div>
<svg class="abs" style="left:211.5px;top:745.7px;overflow:visible" width="31.6" height="39.4" viewBox="0 0 31.6 39.4" ><g transform="rotate(-10 15.8 19.7)"><rect width="31.6" height="39.4" fill="#fbfbfb"/><g fill="#c8c8c8"><circle cx="0.00" cy="0" r="1.050"/><circle cx="0.00" cy="39.4" r="1.050"/><circle cx="3.51" cy="0" r="1.050"/><circle cx="3.51" cy="39.4" r="1.050"/><circle cx="7.02" cy="0" r="1.050"/><circle cx="7.02" cy="39.4" r="1.050"/><circle cx="10.53" cy="0" r="1.050"/><circle cx="10.53" cy="39.4" r="1.050"/><circle cx="14.04" cy="0" r="1.050"/><circle cx="14.04" cy="39.4" r="1.050"/><circle cx="17.56" cy="0" r="1.050"/><circle cx="17.56" cy="39.4" r="1.050"/><circle cx="21.07" cy="0" r="1.050"/><circle cx="21.07" cy="39.4" r="1.050"/><circle cx="24.58" cy="0" r="1.050"/><circle cx="24.58" cy="39.4" r="1.050"/><circle cx="28.09" cy="0" r="1.050"/><circle cx="28.09" cy="39.4" r="1.050"/><circle cx="31.60" cy="0" r="1.050"/><circle cx="31.60" cy="39.4" r="1.050"/><circle cx="0" cy="0.00" r="1.050"/><circle cx="31.6" cy="0.00" r="1.050"/><circle cx="0" cy="3.58" r="1.050"/><circle cx="31.6" cy="3.58" r="1.050"/><circle cx="0" cy="7.16" r="1.050"/><circle cx="31.6" cy="7.16" r="1.050"/><circle cx="0" cy="10.75" r="1.050"/><circle cx="31.6" cy="10.75" r="1.050"/><circle cx="0" cy="14.33" r="1.050"/><circle cx="31.6" cy="14.33" r="1.050"/><circle cx="0" cy="17.91" r="1.050"/><circle cx="31.6" cy="17.91" r="1.050"/><circle cx="0" cy="21.49" r="1.050"/><circle cx="31.6" cy="21.49" r="1.050"/><circle cx="0" cy="25.07" r="1.050"/><circle cx="31.6" cy="25.07" r="1.050"/><circle cx="0" cy="28.65" r="1.050"/><circle cx="31.6" cy="28.65" r="1.050"/><circle cx="0" cy="32.24" r="1.050"/><circle cx="31.6" cy="32.24" r="1.050"/><circle cx="0" cy="35.82" r="1.050"/><circle cx="31.6" cy="35.82" r="1.050"/><circle cx="0" cy="39.40" r="1.050"/><circle cx="31.6" cy="39.40" r="1.050"/></g>
<rect x="2.800" y="2.800" width="26.0" height="33.8" fill="url(#gSky)"/>
</g>
<path d="M3.900 7.200L8.700 5.500c1.600 1.200 2.900 2.800 3.700 4.600l3.300 8-3.500 4.400-4.600-5.500C5.700 14.200 4.400 11 3.900 7.200z" fill="#c9c4bc"/><path d="M5 9l5 7.500M6.800 7l5.500 10.500M9 6.500l4.800 10" stroke="#6e6258" stroke-width=".55" fill="none"/>
<path d="M14.300 18.800l5.500 2c2.500 1.100 4.600 2.700 6 4.600l1.900 3.800-5.500.4-5.600-2.400-4-2.600z" fill="#86705c"/><path d="M16 22l9 5.800M17 24.500l6.500 4" stroke="#cfc6b8" stroke-width=".55"/>
<path d="M11 23l-3.900 4 1.500 2.600 4.600-3.800z" fill="#b48c46"/>
<ellipse cx="13.600" cy="22.300" rx="3.300" ry="2.200" transform="rotate(28 13.600 22.300)" fill="#a47c3a"/><circle cx="16.200" cy="19.900" r="1.300" fill="#7c5e34"/>
<g transform="translate(28 28)" fill="none" stroke="#8c8c94" opacity=".55"><circle r="10" stroke-width=".9"/><circle r="6.200" stroke-width=".8"/><circle r="8.100" stroke-width="1.600" stroke-dasharray=".8 1.300" opacity=".7"/><path d="M.5-3c.8-1.300 1.800-1.300 1.800-1.300s.1 1-.6 1.700c-.6.700-1.200.6-1.200.6zM2.900 1.900c-.4 1-1 1.900-1.700 1.900-.6 0-.9-.4-1.600-.4s-1 .4-1.600.4c-1.400 0-3.200-3.700-1.700-5.600.5-.7 1.400-1 2-1 .7 0 1.200.4 1.700.4s1.200-.5 2.100-.4c.4 0 1.300.2 1.900 1-1.500.9-1.300 3 .1 3.700z" fill="#8c8c94" stroke="none"/></g></svg>
<svg class="abs" style="left:257.75px;top:748px;overflow:visible" width="37.9" height="33" viewBox="0 0 37.9 33" ><rect width="37.900" height="33" rx="5.500" fill="url(#gFT)"/>
<rect x="6" y="8" width="18.300" height="16" rx="3.200" fill="url(#gWh)"/><path d="M25.300 13.200l5.200-4c.7-.5 1.200-.2 1.200.6v12.400c0 .8-.5 1.100-1.200.6l-5.200-4z" fill="#f2f2f2"/>
<circle cx="31.650" cy="25.250" r="10.500" fill="url(#gWh)" stroke="#bdbdbd" stroke-width=".4"/>
<path d="M27.400 20.600c.5-.7 1.300-.9 1.700-.3l1.100 1.700c.3.500.1 1-.3 1.400l-.5.500c.7 1.600 2 3 3.500 3.800l.6-.5c.4-.4 1-.5 1.400-.2l1.600 1.200c.6.500.3 1.200-.4 1.700-1 .8-2.300.8-3.500.2-2.700-1.400-4.800-3.700-5.700-6.600-.4-1.100-.2-2.200.5-2.900z" fill="#2fce4f"/></svg>
<svg class="abs" style="left:309.6px;top:746.5px;overflow:visible" width="43" height="40" viewBox="0 0 43 40" ><path d="M21.500 0C33 0 42.500 7.600 42.500 17.200S33 34.400 21.500 34.400c-2.300 0-4.500-.3-6.500-.9-1.800 2-4.300 3.500-7.300 3.900 1.400-1.700 2.200-3.800 2.300-6C4.200 28.300.5 23.100.5 17.200.5 7.600 10 0 21.500 0z" fill="url(#gMsg)"/>
<path d="M29 17.700c6.900 0 12.400 4.500 12.400 10 0 3.400-2 6.300-5.200 8.100.1 1.400.8 2.700 1.800 3.700-2.100-.2-4-1.100-5.300-2.400-1.200.3-2.400.5-3.700.5-6.900 0-12.400-4.500-12.400-10s5.500-9.900 12.400-9.900z" fill="url(#gMsg2)"/>
<circle cx="22.700" cy="27.700" r="1.750" fill="#1b55b5"/><circle cx="29" cy="27.700" r="1.750" fill="#1b55b5"/><circle cx="35.300" cy="27.700" r="1.750" fill="#1b55b5"/></svg>
<svg class="abs" style="left:364.7px;top:749px;overflow:visible" width="34.5" height="35" viewBox="0 0 34.5 35" ><defs><clipPath id="cMap"><rect width="34.500" height="35" rx="1"/></clipPath></defs>
<g transform="rotate(-7.400 17.250 17.500)"><rect x="-.8" y="-.8" width="36.100" height="36.600" rx="1.500" fill="#fafafa"/><g clip-path="url(#cMap)"><rect width="34.500" height="35" fill="#ece8df"/>
<path d="M13 0h22v14c-9 0-16-4-22-14z" fill="#9bdc7a"/><path d="M21 0h14v9.500c-6 0-11-3.500-14-9.500z" fill="#8dd46a"/>
<path d="M10.500 0c4 12 12 18 24.500 18.500" fill="none" stroke="#fbfaf6" stroke-width="5"/>
<path d="M-1 8l36 22" stroke="#f6c942" stroke-width="5.500"/>
<path d="M0 17.500l11.500 7V35H0z" fill="#f7b6c9"/>
<path d="M12 25v10M18 29v6" stroke="#fbfaf6" stroke-width="3"/>
<rect x="6.800" y="-1" width="4" height="22" fill="#2a7de2"/></g></g>
<circle cx="9.100" cy="20" r="5.600" fill="#1f72de"/><path d="M9.100 16.100l3 7-3-1.700-3 1.700z" fill="#fff"/>
<circle cx="29.500" cy="24.900" r="10.400" fill="url(#gMsg2)" stroke="#c4c8cc" stroke-width=".4"/><circle cx="29.500" cy="24.900" r="6.200" fill="#f3f6f8" stroke="#3f8aa6" stroke-width=".9"/>
<path d="M29.500 15.100l1.500 2.300h-3z" fill="#e8262c"/><path d="M29.500 34.700l1-1.600h-2zM19.700 24.900l1.600-1v2zM39.300 24.900l-1.600-1v2z" fill="#707478"/>
<text x="29.500" y="27.500" font-family="Liberation Sans, sans-serif" font-size="7" font-weight="bold" text-anchor="middle" fill="#8a8e92">3D</text></svg>
<svg class="abs" style="left:414px;top:745.1px;overflow:visible" width="42" height="42" viewBox="0 0 42 42" ><circle cx="21" cy="21" r="21" fill="#f6f6f6" stroke="#dcdcdc" stroke-width=".5"/><g style="isolation:isolate"><rect x="15.800" y="3.400" width="10.400" height="17" rx="5.200" fill="#f8a42e" transform="rotate(0 21 21)" style="mix-blend-mode:multiply" opacity=".92"/><rect x="15.800" y="3.400" width="10.400" height="17" rx="5.200" fill="#f4d63a" transform="rotate(45 21 21)" style="mix-blend-mode:multiply" opacity=".92"/><rect x="15.800" y="3.400" width="10.400" height="17" rx="5.200" fill="#a5d24c" transform="rotate(90 21 21)" style="mix-blend-mode:multiply" opacity=".92"/><rect x="15.800" y="3.400" width="10.400" height="17" rx="5.200" fill="#58c08e" transform="rotate(135 21 21)" style="mix-blend-mode:multiply" opacity=".92"/><rect x="15.800" y="3.400" width="10.400" height="17" rx="5.200" fill="#5b9fea" transform="rotate(180 21 21)" style="mix-blend-mode:multiply" opacity=".92"/><rect x="15.800" y="3.400" width="10.400" height="17" rx="5.200" fill="#9a80d8" transform="rotate(225 21 21)" style="mix-blend-mode:multiply" opacity=".92"/><rect x="15.800" y="3.400" width="10.400" height="17" rx="5.200" fill="#cc6cb8" transform="rotate(270 21 21)" style="mix-blend-mode:multiply" opacity=".92"/><rect x="15.800" y="3.400" width="10.400" height="17" rx="5.200" fill="#ea544a" transform="rotate(315 21 21)" style="mix-blend-mode:multiply" opacity=".92"/></g><circle cx="21" cy="21" r="1.100" fill="#fff"/></svg>
<svg class="abs" style="left:469.2px;top:743.8px;overflow:visible" width="38" height="44" viewBox="0 0 38 44" ><g transform="rotate(-5 19 22)"><rect x="33" y="6" width="4.500" height="7" fill="#e6e6e6"/><rect x="33" y="13" width="4.800" height="8" fill="#58b8ee"/><rect x="33" y="21" width="4.800" height="8" fill="#6fcf6a"/><rect x="33" y="29" width="4.500" height="8" fill="#f4a832"/>
<rect x="0" y="0" width="34" height="42.600" rx="2.500" fill="url(#gBook)"/><rect x="0" y="0" width="3" height="42.600" rx="1.500" fill="#a87a42"/><path d="M3.200 0v42.600" stroke="#8e6634" stroke-width=".5"/>
<circle cx="19" cy="20" r="10.200" fill="#b48750" stroke="#a67a44" stroke-width=".8"/><circle cx="19" cy="16.200" r="3.600" fill="#a47840"/><path d="M11.500 26.500c1.500-4 4.500-5 7.500-5s6 1 7.500 5c-2 2.300-4.700 3.500-7.500 3.500s-5.500-1.200-7.500-3.500z" fill="#a47840"/></g></svg>
<svg class="abs" style="left:522.3px;top:746.8px;overflow:visible" width="32" height="34" viewBox="0 0 32 34" ><g transform="rotate(-7 16 17)"><rect x="-2" y="2.500" width="35.500" height="34.500" rx="1.500" fill="#5f7380"/><rect x="-1" y="1.500" width="33.500" height="34" rx="1" fill="#8fa0aa"/>
<rect x="0" y="0" width="31.600" height="33.500" rx="1" fill="#fbfbfb"/><rect x="0" y="30.500" width="31.600" height="3" fill="#dedede"/><path d="M0 0h31.600v9H0z" fill="#ea4a4e"/>
<text x="15.800" y="7.600" font-family="Liberation Sans, sans-serif" font-size="7.800" text-anchor="middle" fill="#fff" letter-spacing="-.2">MAY</text>
<text x="15.800" y="28.800" font-family="Liberation Sans, sans-serif" font-size="22.500" text-anchor="middle" fill="#222" stroke="#fbfbfb" stroke-width=".5">6</text></g></svg>
<svg class="abs" style="left:571.9px;top:746.5px;overflow:visible" width="38.2" height="38.8" viewBox="0 0 38.2 38.8" ><rect width="38.200" height="38.800" rx="9" fill="#fff"/>
<rect x="11.200" y="6.500" width="19.400" height="16" rx="1" fill="#0a4fa6"/>
<rect x="17.600" y="6.500" width="6.500" height="6" fill="#1478d4"/><rect x="24.100" y="6.500" width="6.500" height="6" fill="#28a8ea"/>
<rect x="17.600" y="12.500" width="6.500" height="6" fill="#0f5cba"/><rect x="24.100" y="12.500" width="6.500" height="6" fill="#1490df"/><rect x="24.100" y="18.500" width="6.500" height="5" fill="#0f6fd0"/>
<path d="M11.200 19l9.700 6.500 9.700-6.500v11.800a1.300 1.300 0 0 1-1.300 1.300H12.500a1.300 1.300 0 0 1-1.300-1.300z" fill="#28a8ea"/><path d="M11.200 19l19 13.100H12.500a1.300 1.300 0 0 1-1.300-1.300z" fill="#1a94e0"/>
<rect x="3.200" y="12" width="14" height="14.500" rx="1.300" fill="#0f62c2"/>
<text x="10.200" y="23.300" font-family="Liberation Sans, sans-serif" font-size="11.500" font-weight="bold" text-anchor="middle" fill="#fff">O</text></svg>
<div class="dot" style="left:589.3px;top:794.300px;width:3.400px;height:3.400px"></div>
<svg class="abs" style="left:626.9px;top:745.5px;overflow:visible" width="32.4" height="37.4" viewBox="0 0 32.4 37.4" ><g transform="rotate(-8.300 16.200 18.700)"><rect x=".4" y=".6" width="32.800" height="37.800" rx="3.200" fill="#2a2a2a"/><rect x="0" y="0" width="32.400" height="37.400" rx="3" fill="#f8f8f8"/>
<circle cx="6.200" cy="7.300" r="2.600" fill="#3478f6"/><circle cx="6.200" cy="14.800" r="2.600" fill="#e8403a"/><circle cx="6.200" cy="22.300" r="2.600" fill="#f0a030"/><circle cx="6.200" cy="29.800" r="2.600" fill="#4a4f58"/>
<path d="M11 7.300h17.500M11 14.800h17.500M11 22.300h17.500M11 29.800h17.500" stroke="#c6c6c6" stroke-width=".7"/></g></svg>
<svg class="abs" style="left:679.1px;top:746px;overflow:visible" width="32" height="38.6" viewBox="0 0 32 38.6" ><g transform="rotate(-8 16 19.500)"><rect x=".3" y=".5" width="32.200" height="39" rx="1" fill="#c9a83e"/><rect width="32" height="38.600" rx="1" fill="#fdfdfd"/><path d="M0 1a1 1 0 0 1 1-1h30a1 1 0 0 1 1 1v5.600H0z" fill="#f7c82c"/><path d="M0 5h32v1.600H0z" fill="#e5b622"/>
<path d="M1.500 9.00h29M1.500 12.55h29M1.500 16.10h29M1.500 19.65h29M1.500 23.20h29M1.500 26.75h29M1.500 30.30h29M1.500 33.85h29" stroke="#dcdcdc" stroke-width=".7"/></g></svg>
<svg class="abs" style="left:725px;top:744.75px;overflow:visible" width="42" height="42" viewBox="0 0 42 42" ><circle cx="21" cy="21" r="20.800" fill="url(#gMus)" stroke="#cfd3d7" stroke-width=".5"/><circle cx="21" cy="21" r="19" fill="none" stroke="#d6dade" stroke-width=".7"/>
<path d="M15.800 10.200l14-3v20.300a3.900 3.500 0 1 1-2.300-3.200V12.700l-9.400 2v15.600a3.900 3.500 0 1 1-2.300-3.200z" fill="url(#gNote)"/></svg>
<svg class="abs" style="left:776.9px;top:745px;overflow:visible" width="42" height="42" viewBox="0 0 42 42" ><circle cx="21" cy="21" r="20.800" fill="url(#gPod)"/>
<path d="M12.640 31.160a13 13 0 1 1 16.720 0" fill="none" stroke="#fff" stroke-width="1.700" stroke-linecap="round"/>
<path d="M14.640 26.500a8.300 8.300 0 1 1 12.720 0" fill="none" stroke="#fff" stroke-width="1.700" stroke-linecap="round"/>
<circle cx="21" cy="19.300" r="3.300" fill="#f4eaf8"/><path d="M18.400 26.500a2.600 2.600 0 0 1 5.200 0l-.6 8.300a2 2 0 0 1-4 0z" fill="#f4eaf8"/></svg>
<svg class="abs" style="left:829px;top:744.75px;overflow:visible" width="42" height="42" viewBox="0 0 42 42" ><circle cx="21" cy="21" r="21" fill="url(#gTV)"/>
<path d="M14.900 13.600c.1 1-.3 1.900-.9 2.500-.6.700-1.500 1.100-2.200 1-.1-.9.300-1.800.9-2.400.6-.7 1.500-1.100 2.200-1.100zM18 23.500c-.3 1-.8 1.900-1.400 2.700-.6.900-1.300 1.600-2.200 1.600s-1.200-.5-2.200-.5-1.400.5-2.200.5c-.9 0-1.600-.8-2.200-1.700-1.300-1.800-2.200-5-.9-7.300.6-1.100 1.800-1.800 3-1.800.9 0 1.800.6 2.400.6.500 0 1.600-.7 2.700-.6.500 0 1.800.2 2.600 1.400-2.100 1.200-1.800 4.300.4 5.100z" fill="#fff" transform="translate(1.600 0)"/>
<text x="27.100" y="27" font-family="Liberation Sans, sans-serif" font-size="16" text-anchor="middle" fill="#fff" stroke="#fff" stroke-width=".35" letter-spacing="-.2">tv</text></svg>
<svg class="abs" style="left:881px;top:745px;overflow:visible" width="42" height="42" viewBox="0 0 42 42" ><circle cx="21" cy="21" r="21" fill="url(#gAS)"/>
<g stroke="#f6f8fb" stroke-width="3.200" stroke-linecap="round"><path d="M11.200 30l12.800-22M18.300 8l12.800 22"/><path d="M8 23.900h26.500"/></g></svg>
<svg class="abs" style="left:933px;top:746.5px;overflow:visible" width="41.6" height="39" viewBox="0 0 41.6 39" ><rect width="41.600" height="39" rx="2.200" fill="url(#gSP)"/><rect x=".4" y=".4" width="40.800" height="38.200" rx="2" fill="none" stroke="#c4c8ca" stroke-width=".5" opacity=".6"/>
<g fill="#2e2e2e"><rect x="19.700" y="3.200" width="2.400" height="4" transform="rotate(0.00 20.900 19.400)"/><rect x="19.700" y="3.200" width="2.400" height="4" transform="rotate(16.36 20.900 19.400)"/><rect x="19.700" y="3.200" width="2.400" height="4" transform="rotate(32.73 20.900 19.400)"/><rect x="19.700" y="3.200" width="2.400" height="4" transform="rotate(49.09 20.900 19.400)"/><rect x="19.700" y="3.200" width="2.400" height="4" transform="rotate(65.45 20.900 19.400)"/><rect x="19.700" y="3.200" width="2.400" height="4" transform="rotate(81.82 20.900 19.400)"/><rect x="19.700" y="3.200" width="2.400" height="4" transform="rotate(98.18 20.900 19.400)"/><rect x="19.700" y="3.200" width="2.400" height="4" transform="rotate(114.55 20.900 19.400)"/><rect x="19.700" y="3.200" width="2.400" height="4" transform="rotate(130.91 20.900 19.400)"/><rect x="19.700" y="3.200" width="2.400" height="4" transform="rotate(147.27 20.900 19.400)"/><rect x="19.700" y="3.200" width="2.400" height="4" transform="rotate(163.64 20.900 19.400)"/><rect x="19.700" y="3.200" width="2.400" height="4" transform="rotate(180.00 20.900 19.400)"/><rect x="19.700" y="3.200" width="2.400" height="4" transform="rotate(196.36 20.900 19.400)"/><rect x="19.700" y="3.200" width="2.400" height="4" transform="rotate(212.73 20.900 19.400)"/><rect x="19.700" y="3.200" width="2.400" height="4" transform="rotate(229.09 20.900 19.400)"/><rect x="19.700" y="3.200" width="2.400" height="4" transform="rotate(245.45 20.900 19.400)"/><rect x="19.700" y="3.200" width="2.400" height="4" transform="rotate(261.82 20.900 19.400)"/><rect x="19.700" y="3.200" width="2.400" height="4" transform="rotate(278.18 20.900 19.400)"/><rect x="19.700" y="3.200" width="2.400" height="4" transform="rotate(294.55 20.900 19.400)"/><rect x="19.700" y="3.200" width="2.400" height="4" transform="rotate(310.91 20.900 19.400)"/><rect x="19.700" y="3.200" width="2.400" height="4" transform="rotate(327.27 20.900 19.400)"/><rect x="19.700" y="3.200" width="2.400" height="4" transform="rotate(343.64 20.900 19.400)"/></g><circle cx="20.900" cy="19.400" r="14.200" fill="#2e2e2e"/><circle cx="20.900" cy="19.400" r="12.200" fill="#8f9294"/><circle cx="20.900" cy="19.400" r="10.300" fill="#4d5052"/>
<g stroke="#b9bcbe" stroke-width="3" stroke-linecap="butt"><path d="M20.900 19.400V9M20.900 19.400l9 5.200M20.900 19.400l-9 5.200" transform="rotate(90 20.900 19.400)"/></g><circle cx="20.900" cy="19.400" r="2.300" fill="#c6c9cb"/></svg>
<div class="abs" style="left:961.1px;top:741.9px;width:18px;height:18px;border-radius:50%;background:#f23a40"></div><div class="t" style="left:961.1px;top:746.6px;width:17.500px;text-align:center;font-size:9.200px;color:#fff">1</div>
<div class="abs" style="left:992px;top:744px;width:1px;height:48px;background:#707070"></div>
<div class="abs" style="left:1067px;top:744px;width:1px;height:48px;background:#707070"></div>
<svg class="abs" style="left:1010.8px;top:743px;overflow:visible" width="36.4" height="46" viewBox="0 0 36.4 46" ><circle cx="18.200" cy="27.250" r="18.100" fill="url(#gWh)"/><circle cx="18.200" cy="27.250" r="18.100" fill="#fff" opacity=".55"/>
<rect x="9.200" y="18.100" width="8.200" height="8.200" fill="#e84e2e"/><rect x="18.700" y="18.100" width="8.200" height="8.200" fill="#7db61a"/><rect x="9.200" y="27.800" width="8.200" height="8.200" fill="#2a9ce8"/><rect x="18.700" y="27.800" width="8.200" height="8.200" fill="#fbb91e"/>
<path d="M14.200 0h7.800v6.300h4.700l-8.600 10-8.600-10h4.700z" fill="url(#gArr)"/></svg>
<div class="abs" style="left:1036.1px;top:741.9px;width:18px;height:18px;border-radius:50%;background:#f23a40"></div><div class="t" style="left:1036.1px;top:746.6px;width:17.500px;text-align:center;font-size:9.200px;color:#fff">1</div>
<div class="dot" style="left:1027.3px;top:794.300px;width:3.400px;height:3.400px"></div>
<svg class="abs" style="left:1081.9px;top:748px;overflow:visible" width="44.3" height="34.5" viewBox="0 0 44.3 34.5" ><path d="M0 2.800A2.200 2.200 0 0 1 2.200 .6h10.300c1.200 0 1.800.4 2.500 1.300l1.100 1.500c.4.500.8.700 1.500.7h24.500a2.200 2.200 0 0 1 2.200 2.200v26.500a1.700 1.700 0 0 1-1.700 1.700H1.700A1.700 1.700 0 0 1 0 32.800z" fill="url(#gFold)"/>
<path d="M0 32.300h44.300v.5a1.700 1.700 0 0 1-1.700 1.700H1.700A1.700 1.700 0 0 1 0 32.800z" fill="#4fa7e0"/><path d="M0 5.600h44.300" stroke="#9adffd" stroke-width=".6" opacity=".8"/>
<circle cx="22.100" cy="19" r="10.300" fill="#56b2ea"/><path d="M19.600 13.300h5v6.500h3.700l-6.200 6.200-6.200-6.200h3.700z" fill="#8ad8fc"/></svg>
<svg class="abs" style="left:1133.5px;top:753px;overflow:visible" width="45" height="25.6" viewBox="0 0 45 25.6" ><rect width="45" height="25.600" fill="#fdfdfd"/><rect width="45" height="1.600" fill="#e3e3e6"/><rect x="0" y="1.600" width="1.600" height="24" fill="#ececf2"/>
<rect x="2" y="4" width="42.500" height="6.800" fill="#4c482f"/><rect x="2" y="4" width="20" height="3" fill="#2f3022"/><rect x="22.500" y="4" width="2.500" height="6.800" fill="#c8c8c8"/><rect x="25" y="4" width="19.500" height="6.800" fill="#6c6148"/><rect x="28" y="5" width="6" height="5.800" fill="#4a5a40"/><rect x="37.500" y="9.300" width="5" height="1.500" fill="#f4f4f4"/>
<rect x="4" y="12" width="4" height="1.400" rx=".7" fill="#555"/><path d="M22.800 15.500l2 3.800h-4z" fill="#e8622a"/><rect x="14" y="20.600" width="17" height=".6" fill="#ddd"/><rect x="23.600" y="22.700" width="4" height="1.500" rx=".5" fill="#2a7de2"/></svg>
<svg class="abs" style="left:1163.2px;top:773px;overflow:visible" width="14.4" height="14.4" viewBox="0 0 14.4 14.4" ><circle cx="7.200" cy="7.200" r="7.200" fill="#f3f3f3"/><circle cx="7.200" cy="7.200" r="6.500" fill="url(#gSaf)"/><g transform="rotate(46 7.200 7.200)"><path d="M7.200 1.200l1.100 6h-2.200z" fill="#f03030"/><path d="M7.200 13.200l1.100-6h-2.200z" fill="#f4f4f4"/></g></svg>
<svg class="abs" style="left:1191px;top:743px;overflow:visible" width="34" height="44.5" viewBox="0 0 34 44.5" ><path d="M.5 6l4.800 34.500c.3 2 5.500 3.500 11.700 3.500s11.400-1.500 11.700-3.500L33.500 6z" fill="url(#gTrash)" opacity=".93"/>
<ellipse cx="17" cy="6" rx="16.700" ry="3.800" fill="#ededed" stroke="#d0d0d0" stroke-width=".6"/>
<path d="M3 5.500l3.500-3.800 4 2.500 3-4 4 3.200 3.500-3 3.500 3.600 4.500-2 2 4c-6 2.800-20 3.200-28-.5z" fill="#f2f2f2"/>
<path d="M6.500 5l3-2.500 2 3.500zM19 6l1.500-3.700 2.500 3.200zM23.500 5.500l2-2.300 3.300 2.800z" fill="#3c3c44"/><path d="M11.500 6l2.500-3.500 2.500 2zM22.200 4.800l.8-1.800 1.400.8z" fill="#e06a2c"/><path d="M14 4.500l1.500-1.300 1.800 1.800z" fill="#58b8e0"/><path d="M16.500 5.800l1.800-.8.700 1.500z" fill="#6cc46a"/>
<path d="M8 12c3 8 2 18 3 28M17 11c-1 9 1.500 20 .5 30M25.500 12c-2 9-1 19-3 28" stroke="#fff" stroke-width="1.600" opacity=".3" fill="none"/>
<path d="M.5 6l4.800 34.500c.3 2 5.500 3.500 11.700 3.500s11.400-1.500 11.700-3.500L33.500 6" fill="none" stroke="#c2c2c2" stroke-width=".5"/></svg>
</body>
</html>
